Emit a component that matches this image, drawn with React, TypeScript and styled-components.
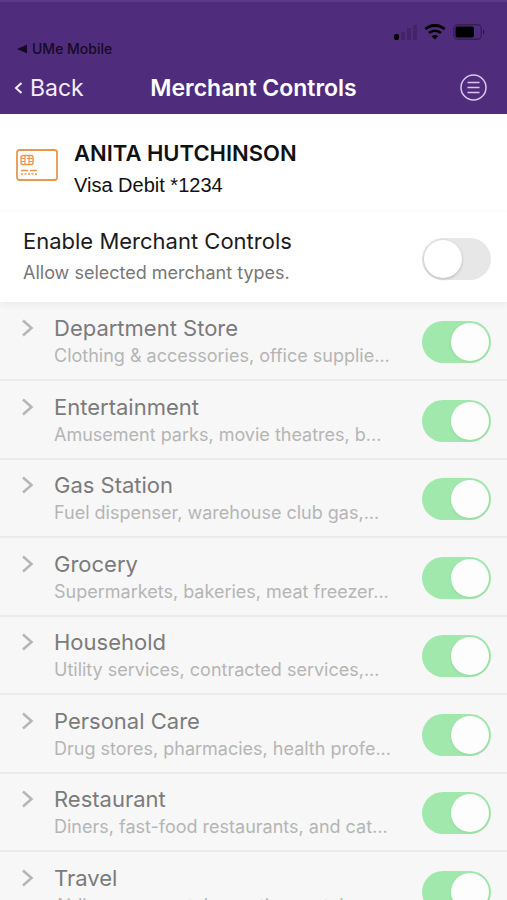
import React, { useState } from "react";
import styled, { createGlobalStyle } from "styled-components";

const GlobalStyle = createGlobalStyle`
  *, *::before, *::after { box-sizing: border-box; }
  body {
    margin: 0;
    background: #f7f7f7;
    font-family: Inter, "Liberation Sans", sans-serif;
  }
`;

const Screen = styled.div`
  height: 100vh;
  display: flex;
  flex-direction: column;
  overflow: hidden;
`;

const Header = styled.header`
  flex: none;
  background: #4f2d7c;
  border-top: 2px solid #5b3b88;
`;

const StatusBar = styled.div`
  display: flex;
  justify-content: space-between;
  height: 57px;
  padding: 20px 22px 0 17px;
  color: #150a24;
`;

const ReturnLink = styled.a`
  display: flex;
  align-items: center;
  align-self: flex-end;
  gap: 5px;
  color: inherit;
  font-size: 14px;
  line-height: 20px;
  font-weight: 500;
  text-decoration: none;
`;

const StatusIcons = styled.div`
  display: flex;
  align-items: center;
  gap: 7px;
  height: 20px;
`;

const NavBar = styled.div`
  display: grid;
  grid-template-columns: 1fr auto 1fr;
  align-items: center;
  height: 55px;
  padding: 2px 14px 0;
  color: #fff;
`;

const BackButton = styled.button`
  display: flex;
  align-items: center;
  justify-self: start;
  gap: 7px;
  padding: 0;
  border: 0;
  background: none;
  color: #f3edfa;
  font: 400 23px/32px Inter, sans-serif;
  cursor: pointer;
`;

const Title = styled.h1`
  margin: 0;
  font-size: 23px;
  line-height: 32px;
  font-weight: 600;
`;

const MenuButton = styled.button`
  display: flex;
  justify-self: end;
  padding: 0 6px 0 0;
  border: 0;
  background: none;
  color: #d9c6ee;
  cursor: pointer;
`;

const Account = styled.section`
  flex: none;
  display: flex;
  align-items: flex-start;
  gap: 16px;
  height: 98px;
  padding: 24px 16px 0;
  background: #fff;
`;

const CardBadge = styled.span`
  display: flex;
  padding-top: 11px;
`;

const AccountText = styled.div`
  display: flex;
  flex-direction: column;
  gap: 2px;
`;

const AccountName = styled.h2`
  margin: 0;
  color: #111;
  font-size: 22px;
  line-height: 30px;
  font-weight: 600;
`;

const AccountCard = styled.p`
  margin: 0;
  color: #111;
  font: 400 20px/30px "Liberation Sans", sans-serif;
`;

const Master = styled.section`
  position: relative;
  flex: none;
  display: flex;
  align-items: center;
  justify-content: space-between;
  height: 90px;
  padding: 4px 16px 0 23px;
  background: #fff;
  box-shadow: 0 2px 8px rgba(0, 0, 0, 0.06);
`;

const Labels = styled.label`
  flex: 1;
  min-width: 0;
  display: flex;
  flex-direction: column;
  gap: 4px;
  padding-bottom: 4px;
`;

const Label = styled.span<{ $muted?: boolean }>`
  color: ${(p) => (p.$muted ? "#7b7b7b" : "#1c1c1c")};
  font-size: 22px;
  line-height: 28px;
`;

const Detail = styled.span<{ $muted?: boolean }>`
  white-space: nowrap;
  color: ${(p) => (p.$muted ? "#b5b5b5" : "#777")};
  font-size: 18px;
  line-height: 28px;
`;

const List = styled.ul`
  flex: 1;
  min-height: 0;
  margin: 0;
  padding: 1px 0 0;
  overflow: hidden;
  list-style: none;
`;

const Row = styled.li`
  display: flex;
  align-items: center;
  height: 78px;
  padding: 2px 16px 0 20px;
  border-bottom: 2px solid #ebebeb;

  &:nth-child(even) { height: 79px; }
`;

const RowLabels = styled(Labels)`
  gap: 0;
  padding-bottom: 0;
`;

const Expand = styled.button`
  display: flex;
  flex: none;
  width: 34px;
  padding: 0 0 28px;
  border: 0;
  background: none;
  color: #b5b5b5;
  cursor: pointer;
`;

const Switch = styled.input<{ $muted?: boolean }>`
  appearance: none;
  flex: none;
  display: flex;
  align-items: center;
  width: 69px;
  height: 42px;
  margin: 0;
  padding: 0 2px;
  border-radius: 21px;
  background: #e7e7e7;
  cursor: pointer;

  &::before {
    content: "";
    width: 38px;
    height: 38px;
    border-radius: 50%;
    background: #fff;
    box-shadow: 0 1px 3px rgba(0, 0, 0, 0.22);
  }

  &:checked {
    justify-content: flex-end;
    background: ${(p) => (p.$muted ? "#a0e8ac" : "#4cd964")};
  }

  &:checked::before {
    background: #fdfdfd;
    box-shadow: 0 1px 3px rgba(0, 0, 0, 0.08);
  }
`;

const merchantTypes = [
  { id: "department", name: "Department Store", detail: "Clothing & accessories, office supplie..." },
  { id: "entertainment", name: "Entertainment", detail: "Amusement parks, movie theatres, b..." },
  { id: "gas", name: "Gas Station", detail: "Fuel dispenser, warehouse club gas,..." },
  { id: "grocery", name: "Grocery", detail: "Supermarkets, bakeries, meat freezer..." },
  { id: "household", name: "Household", detail: "Utility services, contracted services,..." },
  { id: "personal", name: "Personal Care", detail: "Drug stores, pharmacies, health profe..." },
  { id: "restaurant", name: "Restaurant", detail: "Diners, fast-food restaurants, and cat..." },
  { id: "travel", name: "Travel", detail: "Airlines, car rental, vacation rental..." },
];

const SignalIcon = () => (
  <svg width="23" height="16" viewBox="0 0 23 16" aria-hidden="true">
    <rect x="0" y="10" width="5" height="6" rx="2" fill="#000" />
    <g fill="#432466">
      <rect x="7" y="8" width="4" height="8" rx="1" />
      <rect x="13" y="4" width="4" height="12" rx="1" />
      <rect x="19" y="1" width="4" height="15" rx="1" />
    </g>
  </svg>
);

const WifiIcon = () => (
  <svg width="22" height="16" viewBox="0 0 22 16" fill="none" stroke="#000" aria-hidden="true">
    <path d="M1.5 5.2a14 14 0 0 1 19 0" strokeWidth="3" />
    <path d="M5 9a9 9 0 0 1 12 0" strokeWidth="2.6" />
    <path d="M11 15.6 7.8 12.3a4.6 4.6 0 0 1 6.4 0z" fill="#000" stroke="none" />
  </svg>
);

const BatteryIcon = () => (
  <svg width="32" height="16" viewBox="0 0 32 16" aria-hidden="true">
    <rect x="0.7" y="0.7" width="27.6" height="14.6" rx="4" fill="none" stroke="#352050" strokeWidth="1.4" />
    <rect x="2.5" y="2.5" width="18.5" height="11" rx="2" fill="#000" />
    <path d="M30 5.5c2 1 2 4 0 5z" fill="#2a173f" />
  </svg>
);

const CardIcon = () => (
  <svg width="42" height="32" viewBox="0 0 42 32" fill="none" stroke="#ea974e" aria-hidden="true">
    <rect x="1" y="1" width="40" height="30" rx="2.5" strokeWidth="1.8" />
    <rect x="5" y="6.5" width="12" height="9" rx="2" strokeWidth="1.4" />
    <path d="M5 9.5h4v3H5M17 9.5h-4v3h4M9 6.5v9M13 15.5v-3M13 6.5v3h-2" strokeWidth="1.2" />
    <path d="M5 21.5h7M14 21.5h7" strokeWidth="1.4" />
    <path d="M5 25h16" strokeWidth="1.4" strokeDasharray="2 1.5" />
  </svg>
);

export default function App() {
  const [enabled, setEnabled] = useState(false);
  const [allowed, setAllowed] = useState<Record<string, boolean>>(
    Object.fromEntries(merchantTypes.map((m) => [m.id, true]))
  );

  return (
    <Screen>
      <GlobalStyle />
      <Header>
        <StatusBar>
          <ReturnLink href="#ume">
            <svg width="10" height="10" viewBox="0 0 10 10" aria-hidden="true">
              <path d="M10 .5v9L0 5z" fill="currentColor" />
            </svg>
            UMe Mobile
          </ReturnLink>
          <StatusIcons>
            <SignalIcon />
            <WifiIcon />
            <BatteryIcon />
          </StatusIcons>
        </StatusBar>
        <NavBar>
          <BackButton type="button">
            <svg width="9" height="12" viewBox="0 0 9 12" fill="none" stroke="currentColor" strokeWidth="2" aria-hidden="true">
              <path d="M7.5 1 2 6l5.5 5" />
            </svg>
            Back
          </BackButton>
          <Title>Merchant Controls</Title>
          <MenuButton type="button" aria-label="Menu">
            <svg width="27" height="27" viewBox="0 0 27 27" fill="none" stroke="currentColor" aria-hidden="true">
              <circle cx="13.5" cy="13.5" r="12.5" strokeWidth="1.5" />
              <path d="M7.5 8.5h12M7.5 13.5h12M7.5 18.5h12" strokeWidth="1.3" />
            </svg>
          </MenuButton>
        </NavBar>
      </Header>
      <Account>
        <CardBadge>
          <CardIcon />
        </CardBadge>
        <AccountText>
          <AccountName>ANITA HUTCHINSON</AccountName>
          <AccountCard>Visa Debit *1234</AccountCard>
        </AccountText>
      </Account>
      <Master>
        <Labels htmlFor="enable-controls">
          <Label>Enable Merchant Controls</Label>
          <Detail>Allow selected merchant types.</Detail>
        </Labels>
        <Switch
          id="enable-controls"
          type="checkbox"
          role="switch"
          checked={enabled}
          onChange={(e) => setEnabled(e.target.checked)}
        />
      </Master>
      <List>
        {merchantTypes.map((m) => (
          <Row key={m.id}>
            <Expand type="button" aria-label={`Show ${m.name} details`}>
              <svg width="14" height="18" viewBox="0 0 14 18" fill="none" stroke="currentColor" strokeWidth="2.5" aria-hidden="true">
                <path d="M3 1.5 11.5 9 3 16.5" />
              </svg>
            </Expand>
            <RowLabels htmlFor={m.id}>
              <Label $muted>{m.name}</Label>
              <Detail $muted>{m.detail}</Detail>
            </RowLabels>
            <Switch
              $muted
              id={m.id}
              type="checkbox"
              role="switch"
              checked={allowed[m.id]}
              onChange={(e) => setAllowed({ ...allowed, [m.id]: e.target.checked })}
            />
          </Row>
        ))}
      </List>
    </Screen>
  );
}
